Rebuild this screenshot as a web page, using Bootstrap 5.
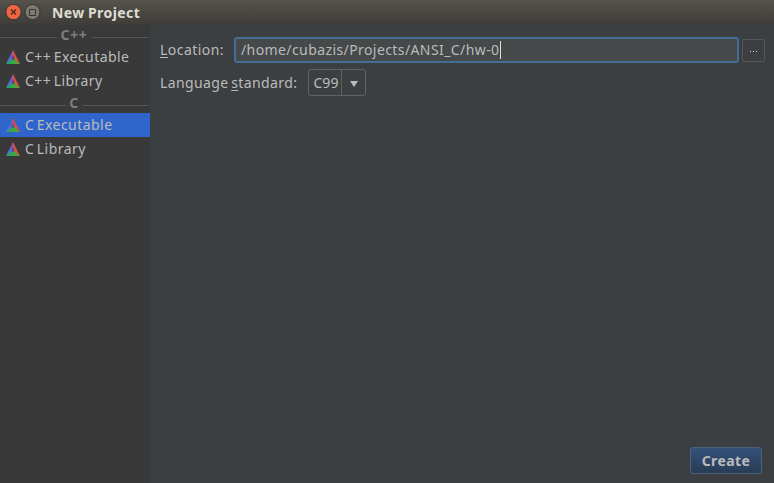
<!DOCTYPE html>
<html lang="en">
<head>
<meta charset="utf-8">
<title>New Project</title>
<link href="https://cdn.jsdelivr.net/npm/bootstrap@5.3.0/dist/css/bootstrap.min.css" rel="stylesheet">
<style>
body{background:#3c3f41;color:#bbb;font:14px/24px "Noto Sans","Open Sans",sans-serif;overflow:hidden}
.titlebar{height:25px;padding:0 5px;background:linear-gradient(#55534c,#3d3c38);color:#dfdbd2;font-weight:700;line-height:24px}
.side{width:150px;background:#393939}
.group-head{height:20px;padding-right:1px;font-weight:700;color:#7d7d7d;line-height:20px;gap:4px;letter-spacing:.7px}
.group-head i{height:1px;background:#555;flex:1 1 0;margin-top:5px}
.group-head span{margin-left:-1px}
.side .list-group-item{height:24px;padding:0 0 0 6px;background:none;border:0;color:#bbb;line-height:24px;gap:5px;letter-spacing:.45px;word-spacing:-1.6px}
.side .list-group-item.active{background:#2f65ca;margin:0}
.main{padding:12px 9px 9px 10px}
u{text-underline-offset:2px}
.path{height:26px;margin-left:10px;padding:0 0 0 5px;background:#45494a;border:2px solid #466d94;border-radius:3px;color:#bbb;line-height:22px}
.caret{width:1px;height:18px;background:#ddd}
.browse{width:23px;height:23px;margin-left:3px;border:1px solid #55585a;border-radius:2px;color:#bbb;padding:0}
.standard-row{margin-top:6px}
.combo{width:58px;height:27px;margin-left:11px;border:1px solid #606364;border-radius:3px;line-height:25px}
.combo-arrow{width:24px;border-left:1px solid #606364}
.actions{padding-right:3px}
.create{width:72px;height:27px;padding:0;border:1px solid #4c617a;border-radius:3px;background:linear-gradient(#34527a,#283c55)!important;color:#bbb;font-size:14px;font-weight:700;line-height:24px;letter-spacing:.4px}
.t-title{margin-left:7px;letter-spacing:.45px;word-spacing:-1px}
.t-loc{letter-spacing:.45px}
.t-path{letter-spacing:.41px}
.t-lang{letter-spacing:.4px;word-spacing:-1.5px}
.t-c99{letter-spacing:.1px}
</style>
<script src="https://cdn.jsdelivr.net/npm/bootstrap@5.3.0/dist/js/bootstrap.bundle.min.js"></script>
</head>
<body class="vh-100 d-flex flex-column">
<svg class="position-absolute" width="0" height="0">
<defs>
<linearGradient id="gl" x1="1" y1="0" x2="0" y2="1"><stop offset="0" stop-color="#bd4a7d"/><stop offset=".35" stop-color="#5960cf"/><stop offset="1" stop-color="#4a86e8"/></linearGradient>
<linearGradient id="gb" x1="0" x2="1"><stop offset="0" stop-color="#2c9a80"/><stop offset=".5" stop-color="#30ad42"/><stop offset="1" stop-color="#75943c"/></linearGradient>
</defs>
<symbol id="logo" viewBox="0 0 14 14"><path fill="url(#gl)" d="M7 0 0 14 6 9.7 7.5 4z"/><path fill="#e34b42" d="M7 0 14 14 8.5 9.7 6.8 4z"/><path fill="url(#gb)" d="M0 14 5.8 9.3h3L14 14z"/><path fill="#5a4a78" d="M7.1 6.5 8.5 9.5H5.8z"/></symbol>
</svg>
<header class="titlebar d-flex align-items-center flex-shrink-0">
<svg width="40" height="18" viewBox="0 0 40 18" class="flex-shrink-0"><circle cx="8.5" cy="8" r="7.7" fill="#ec6642" stroke="#35322e"/><path d="m6 5.5 5 5m0-5-5 5" stroke="#4b2318" stroke-width="1.2"/><circle cx="27.5" cy="8" r="7.5" fill="#7c7a73" stroke="#35342f"/><path d="M24.5 5.5h6v6h-6z" fill="none" stroke="#37352f"/></svg>
<span class="t-title">New Project</span>
</header>
<div class="d-flex flex-grow-1">
<nav class="side flex-shrink-0">
<div class="group-head d-flex align-items-center"><i></i><span>C++</span><i></i></div>
<div class="list-group list-group-flush">
<div class="list-group-item d-flex align-items-center"><svg width="14" height="14"><use href="#logo"/></svg><span>C++ Executable</span></div>
<div class="list-group-item d-flex align-items-center"><svg width="14" height="14"><use href="#logo"/></svg><span>C++ Library</span></div>
</div>
<div class="group-head d-flex align-items-center"><i></i><span>C</span><i></i></div>
<div class="list-group list-group-flush">
<div class="list-group-item active d-flex align-items-center"><svg width="14" height="14"><use href="#logo"/></svg><span>C Executable</span></div>
<div class="list-group-item d-flex align-items-center"><svg width="14" height="14"><use href="#logo"/></svg><span>C Library</span></div>
</div>
</nav>
<main class="main flex-grow-1 d-flex flex-column">
<div class="d-flex align-items-center"><label class="t-loc"><u>L</u>ocation:</label>
<div class="path flex-grow-1 d-flex align-items-center"><span class="t-path">/home/cubazis/Projects/ANSI_C/hw-0</span><span class="caret"></span></div>
<button class="browse btn d-flex align-items-center justify-content-center"><svg width="9" height="3"><path d="M1 0h1v1H1zM4 0h1v1H4zM7 0h1v1H7z" transform="translate(0 2)" fill="#ddd"/></svg></button></div>
<div class="standard-row d-flex align-items-center"><label class="t-lang">Language <u>s</u>tandard:</label>
<div class="combo d-flex"><span class="flex-grow-1 ps-1 t-c99">C99</span><span class="combo-arrow d-flex align-items-center justify-content-center"><svg width="8" height="7" class="mt-1"><path d="M0 0h8L4 6z" fill="#bbb"/></svg></span></div></div>
<div class="actions mt-auto d-flex justify-content-end"><button class="create btn">Create</button></div>
</main>
</div>
</body>
</html>
